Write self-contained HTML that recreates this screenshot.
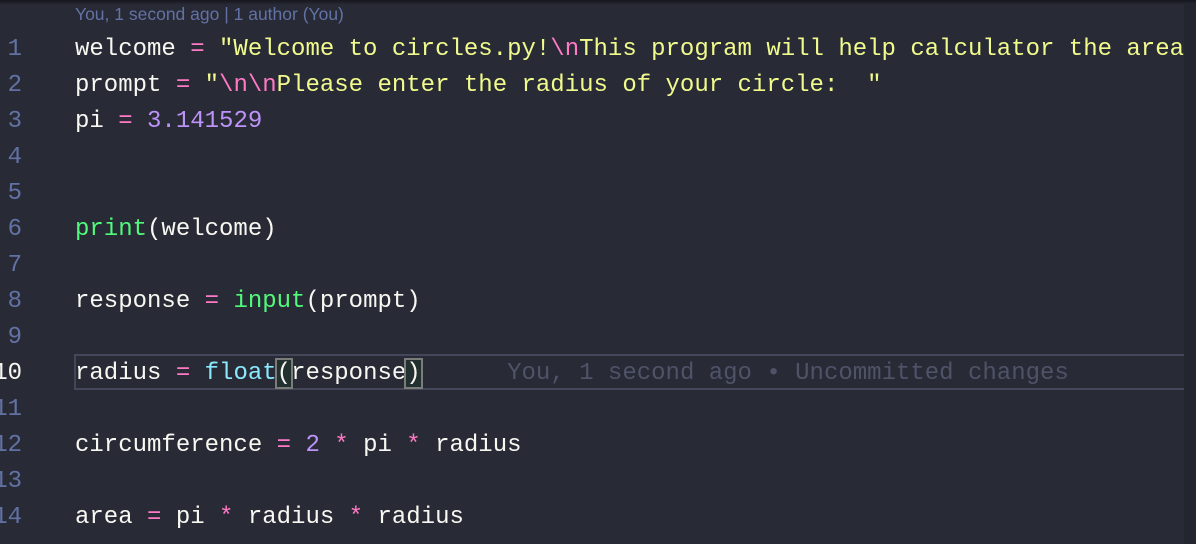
<!DOCTYPE html>
<html><head><style>
body{margin:0;width:1196px;height:544px;overflow:hidden;background:#282a36;font-family:"Liberation Mono",monospace;position:relative}
.top{position:absolute;left:0;top:0;width:1196px;height:5px;background:linear-gradient(#16171d,#282a36)}
.lens{position:absolute;left:75px;top:4px;font-family:"Liberation Sans",sans-serif;font-size:17.5px;color:#6272a4}
.ln{position:absolute;left:-30px;width:52px;text-align:right;font-size:24px;color:#6272a4;line-height:36px}
.code{position:absolute;left:75px;font-size:24px;line-height:36px;color:#f8f8f2;white-space:pre}
.s{color:#f1fa8c}.e{color:#ff79c6}.n{color:#bd93f9}.f{color:#50fa7b}.c{color:#8be9fd}
.cur{position:absolute;left:74px;top:354px;width:1114px;height:32px;border:2px solid #44475a}
.br{outline:2px solid #7a7d7a;background:#233030}
.blame{color:#4f5368}
.mini{position:absolute;left:1184px;top:4px;width:12px;height:540px;background:#23252f}
</style></head><body>
<div class="top"></div>
<div class="lens">You, 1 second ago | 1 author (You)</div>
<div class="cur"></div>
<div class="mini"></div>
<div style="position:absolute;left:0;top:32px">
<div class="ln" style="top:0">1</div><div class="ln" style="top:36px">2</div><div class="ln" style="top:72px">3</div><div class="ln" style="top:108px">4</div><div class="ln" style="top:144px">5</div><div class="ln" style="top:180px">6</div><div class="ln" style="top:216px">7</div><div class="ln" style="top:252px">8</div><div class="ln" style="top:288px">9</div><div class="ln" style="top:324px;color:#f8f8f2">10</div><div class="ln" style="top:360px">11</div><div class="ln" style="top:396px">12</div><div class="ln" style="top:432px">13</div><div class="ln" style="top:468px">14</div>
<div class="code" style="top:0">welcome <span class="e">=</span> <span class="s">"Welcome to circles.py!<span class="e">\n</span>This program will help calculator the area</span></div>
<div class="code" style="top:36px">prompt <span class="e">=</span> <span class="s">"<span class="e">\n\n</span>Please enter the radius of your circle:  "</span></div>
<div class="code" style="top:72px">pi <span class="e">=</span> <span class="n">3.141529</span></div>
<div class="code" style="top:180px"><span class="f">print</span>(welcome)</div>
<div class="code" style="top:252px">response <span class="e">=</span> <span class="f">input</span>(prompt)</div>
<div class="code" style="top:324px">radius <span class="e">=</span> <span class="c">float</span><span class="br">(</span>response<span class="br">)</span>      <span class="blame">You, 1 second ago • Uncommitted changes</span></div>
<div class="code" style="top:396px">circumference <span class="e">=</span> <span class="n">2</span> <span class="e">*</span> pi <span class="e">*</span> radius</div>
<div class="code" style="top:468px">area <span class="e">=</span> pi <span class="e">*</span> radius <span class="e">*</span> radius</div>
</div>
</body></html>
